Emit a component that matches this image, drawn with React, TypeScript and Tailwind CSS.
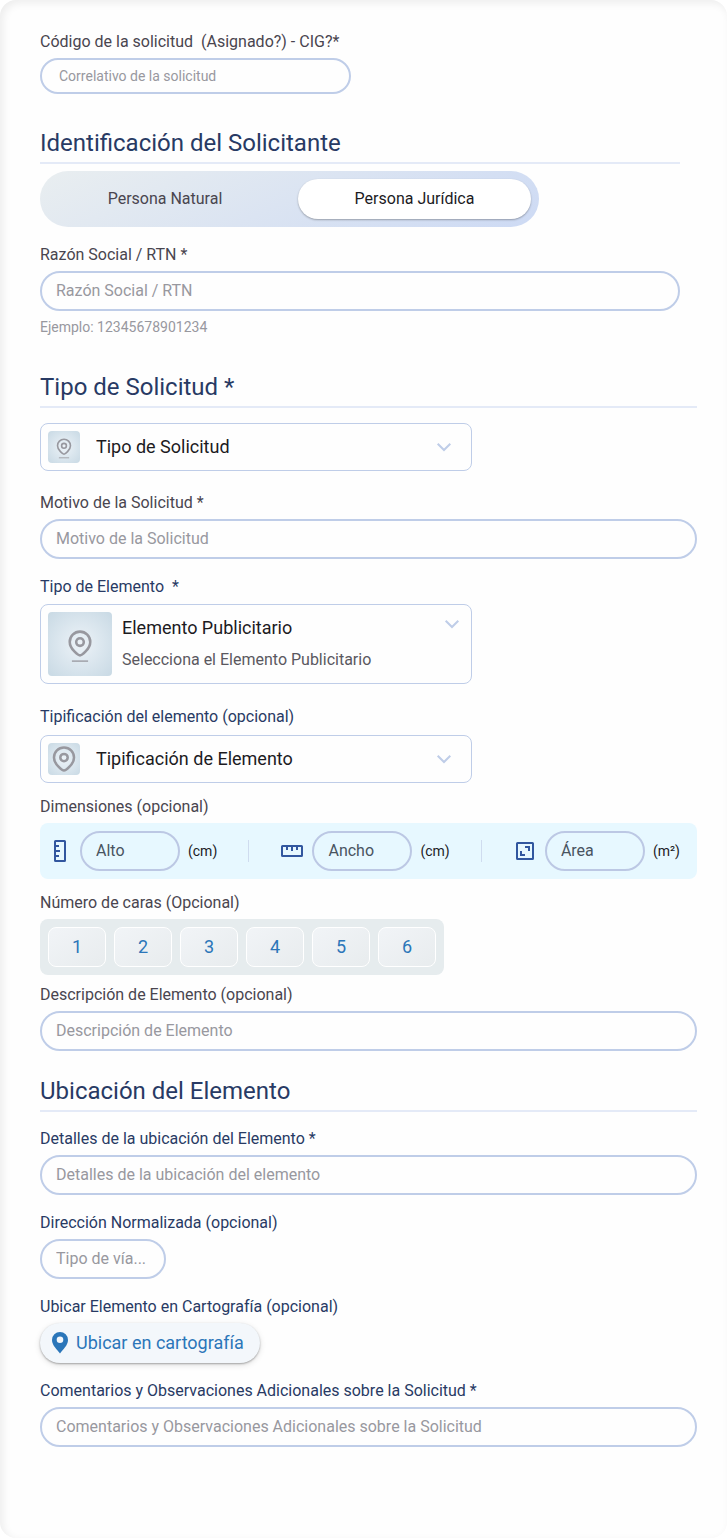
import { useState } from 'react';

const LABEL = 'mb-1 block text-base leading-6';
const INPUT =
  'block h-10 w-full rounded-full border-2 border-[#bfcde8] bg-transparent px-3.5 pb-0.5 text-base text-[#49454f] placeholder:text-[#98989f] outline-none focus:border-[#2b76b9]';
const TITLE = 'border-b-2 border-[#e4eaf7] pb-[3px] text-2xl leading-8 text-[#283a64]';

function Chevron({ className = '' }: { className?: string }) {
  return (
    <svg className={className} width="16" height="16" viewBox="0 0 16 16" fill="none" stroke="#bfcde8" strokeWidth="2" aria-hidden="true">
      <path d="M1.700 4.700 8 11l6.300-6.300" />
    </svg>
  );
}

// Pin with an optional line under it
function PinIcon({ size, line = true }: { size: number; line?: boolean }) {
  return (
    <svg width={size} height={size} viewBox={line ? '0 -2.5 32 40' : '4 3 24 28'} fill="none" stroke="#98989f" strokeWidth="2.700" aria-hidden="true">
      <path d="M16 29.500c-1.400 0-10.800-6.500-10.800-14.200a10.800 10.800 0 0 1 21.600 0c0 7.700-9.400 14.200-10.800 14.200Z" />
      <circle cx="16" cy="15.500" r="4" />
      {line && <path d="M7.500 35.500h17" strokeWidth="1.400" />}
    </svg>
  );
}

function Thumb({ children, className }: { children: React.ReactNode; className: string }) {
  return (
    <span className={`flex shrink-0 items-center justify-center rounded bg-[radial-gradient(circle,#edf3f8_0%,#c8d9e4_100%)] ${className}`}>
      {children}
    </span>
  );
}

function TextField({ id, label, placeholder, blue }: { id: string; label: string; placeholder: string; blue?: boolean }) {
  return (
    <div>
      <label htmlFor={id} className={`${LABEL} ${blue ? 'text-[#283a64]' : 'text-[#49454f]'}`}>{label}</label>
      <input id={id} type="text" placeholder={placeholder} className={INPUT} />
    </div>
  );
}

function RulerV() {
  return (
    <svg width="24" height="24" viewBox="0 0 24 24" fill="none" stroke="#32579f" strokeWidth="2" aria-hidden="true">
      <rect x="7" y="2" width="10" height="20" rx="0.5" />
      <path d="M8 7h3M8 12h4M8 17h3" />
    </svg>
  );
}

function RulerH() {
  return (
    <svg width="24" height="24" viewBox="0 0 24 24" fill="none" stroke="#32579f" strokeWidth="2" aria-hidden="true">
      <rect x="2" y="7" width="20" height="10" rx="0.5" />
      <path d="M7 8v3M12 8v4M17 8v3" />
    </svg>
  );
}

function AreaIcon() {
  return (
    <svg width="24" height="24" viewBox="0 0 24 24" fill="none" stroke="#32579f" strokeWidth="2" aria-hidden="true">
      <rect x="4" y="4" width="16" height="16" rx="0.5" />
      <path d="M12 8h4v4M8 12v4h4" />
    </svg>
  );
}

const dimensiones = [
  { id: 'alto', nombre: 'Alto', unidad: '(cm)', icon: <RulerV /> },
  { id: 'ancho', nombre: 'Ancho', unidad: '(cm)', icon: <RulerH /> },
  { id: 'area', nombre: 'Área', unidad: '(m²)', icon: <AreaIcon /> },
];

export default function App() {
  const [persona, setPersona] = useState('juridica');
  const [caras, setCaras] = useState(0);

  return (
    <main className="min-h-screen rounded-2xl bg-[#fefefe] pt-[30px] pr-[30px] pb-[91px] pl-10 font-['Roboto',sans-serif] shadow-[inset_3px_3px_8px_rgba(0,0,0,0.07)]">
      <form onSubmit={(e) => e.preventDefault()}>

        <section className="pr-[17px]">
          <label htmlFor="codigo" className={`${LABEL} whitespace-pre text-[#49454f]`}>{'Código de la solicitud  (Asignado?) - CIG?*'}</label>
          <input id="codigo" type="text" placeholder="Correlativo de la solicitud"
            className="block h-9 w-full max-w-[311px] rounded-full border-2 border-[#bfcde8] px-[17px] text-sm placeholder:text-[#98989f] outline-none" />

          <h2 className={`mt-[33px] ${TITLE}`}>Identificación del Solicitante</h2>

          <div className="mt-[7px] flex h-14 max-w-[499px] gap-4 rounded-full bg-[linear-gradient(155deg,#e9eef0,#cddaf4)] p-2">
            {[['natural', 'Persona Natural'], ['juridica', 'Persona Jurídica']].map(([key, texto]) => (
              <button key={key} type="button" onClick={() => setPersona(key)}
                className={`h-10 rounded-full text-base ${persona === key ? 'w-[233px] bg-white text-[#1c1b1f] shadow-[0_1px_2px_rgba(0,0,0,0.3)]' : 'flex-1 text-[#49454f]'}`}>
                {texto}
              </button>
            ))}
          </div>

          <div className="mt-4">
            <TextField id="razon" label="Razón Social / RTN *" placeholder="Razón Social / RTN" />
            <p className="mt-1.5 text-sm leading-5 text-[#98989f]">Ejemplo: 12345678901234</p>
          </div>
        </section>

        <section className="mt-[34px]">
          <h2 className={TITLE}>Tipo de Solicitud *</h2>

          <div className="relative mt-[15px] flex h-12 max-w-[432px] items-center rounded-lg border border-[#bfcde8] px-[7px]">
            <Thumb className="size-8"><PinIcon size={24} /></Thumb>
            <select aria-label="Tipo de Solicitud" className="h-full flex-1 appearance-none bg-transparent pl-4 text-lg text-[#1c1b1f] outline-none">
              <option>Tipo de Solicitud</option>
            </select>
            <Chevron className="pointer-events-none absolute right-[19px]" />
          </div>

          <div className="mt-5">
            <TextField id="motivo" label="Motivo de la Solicitud *" placeholder="Motivo de la Solicitud" />
          </div>

          <label htmlFor="elemento" className="mt-4 mb-[5px] block text-base leading-6 whitespace-pre text-[#283a64]">{'Tipo de Elemento  *'}</label>
          <div className="relative flex h-20 max-w-[432px] items-center rounded-lg border border-[#bfcde8] px-[7px]">
            <Thumb className="size-16"><PinIcon size={38} /></Thumb>
            <div className="flex flex-1 flex-col pl-2.5">
              <select id="elemento" className="h-8 appearance-none bg-transparent text-lg leading-8 text-[#1c1b1f] outline-none">
                <option>Elemento Publicitario</option>
              </select>
              <span className="text-base leading-8 text-[#5a5860]">Selecciona el Elemento Publicitario</span>
            </div>
            <Chevron className="pointer-events-none absolute top-[11px] right-[11px]" />
          </div>

          <label htmlFor="tipificacion" className="mt-[21px] mb-1.5 block text-base leading-6 text-[#283a64]">Tipificación del elemento (opcional)</label>
          <div className="relative flex h-12 max-w-[432px] items-center rounded-lg border border-[#bfcde8] px-[7px]">
            <Thumb className="size-8"><PinIcon size={26} line={false} /></Thumb>
            <select id="tipificacion" className="h-full flex-1 appearance-none bg-transparent pl-4 text-lg text-[#1c1b1f] outline-none">
              <option>Tipificación de Elemento</option>
            </select>
            <Chevron className="pointer-events-none absolute right-[19px]" />
          </div>

          {/* Dimensiones */}
          <p className={`mt-3 ${LABEL} text-[#49454f]`}>Dimensiones (opcional)</p>
          <div className="flex h-14 items-center justify-between rounded-lg bg-[#e7f8ff] pr-[17px] pl-2">
            {dimensiones.map((d, i) => (
              <div key={d.id} className="contents">
                {i > 0 && <span className="h-[22px] w-px bg-[#cfdcef]" />}
                <div className="flex items-center gap-2">
                  {d.icon}
                  <input id={d.id} type="text" placeholder={d.nombre} aria-label={d.nombre}
                    className="h-10 w-[100px] rounded-full border-2 border-[#bcc8e4] bg-transparent px-3.5 pb-0.5 text-base placeholder:text-[#49545f] outline-none" />
                  <label htmlFor={d.id} className="text-sm text-[#1c1b1f]">{d.unidad}</label>
                </div>
              </div>
            ))}
          </div>

          {/* Caras */}
          <p className={`mt-3 ${LABEL} text-[#49454f]`}>Número de caras (Opcional)</p>
          <div className="flex w-fit gap-2 rounded-lg bg-[#e6ecee] p-2">
            {[1, 2, 3, 4, 5, 6].map((n) => (
              <button key={n} type="button" aria-pressed={caras === n} onClick={() => setCaras(n)}
                className="h-10 w-[58px] rounded-lg border border-white bg-linear-to-br from-[#f1f4f7] to-[#e8ecee] text-lg text-[#2b76b9]">
                {n}
              </button>
            ))}
          </div>

          <div className="mt-2">
            <TextField id="descripcion" label="Descripción de Elemento (opcional)" placeholder="Descripción de Elemento" />
          </div>
        </section>

        <section className="mt-6">
          <h2 className={TITLE}>Ubicación del Elemento</h2>

          <div className="mt-[15px] flex flex-col gap-4">
            <TextField blue id="detalles" label="Detalles de la ubicación del Elemento *" placeholder="Detalles de la ubicación del elemento" />

            <div>
              <label htmlFor="via" className={`${LABEL} text-[#283a64]`}>Dirección Normalizada (opcional)</label>
              <div className="w-[126px]">
                <input id="via" type="text" placeholder="Tipo de vía..." className={INPUT} />
              </div>
            </div>

            <div>
              <p className={`${LABEL} text-[#283a64]`}>Ubicar Elemento en Cartografía (opcional)</p>
              <button type="button" className="flex h-10 items-center gap-1 rounded-full bg-[#f3f7fb] pr-4 pl-2 text-lg text-[#2b76b9] shadow-[0_1px_2px_rgba(0,0,0,0.3),0_2px_6px_rgba(0,0,0,0.12)]">
                <svg width="24" height="24" viewBox="0 0 24 24" fill="#2b76b9" fillRule="evenodd" aria-hidden="true">
                  <path d="M12 1a8 8 0 0 0-8 8c0 5.500 5.300 9.500 8 13.500 2.700-4 8-8 8-13.500a8 8 0 0 0-8-8Zm0 4.500a3.300 3.300 0 1 1 0 6.600 3.300 3.300 0 0 1 0-6.600Z" />
                </svg>
                Ubicar en cartografía
              </button>
            </div>

            <TextField blue id="comentarios" label="Comentarios y Observaciones Adicionales sobre la Solicitud *" placeholder="Comentarios y Observaciones Adicionales sobre la Solicitud" />
          </div>
        </section>

      </form>
    </main>
  );
}
